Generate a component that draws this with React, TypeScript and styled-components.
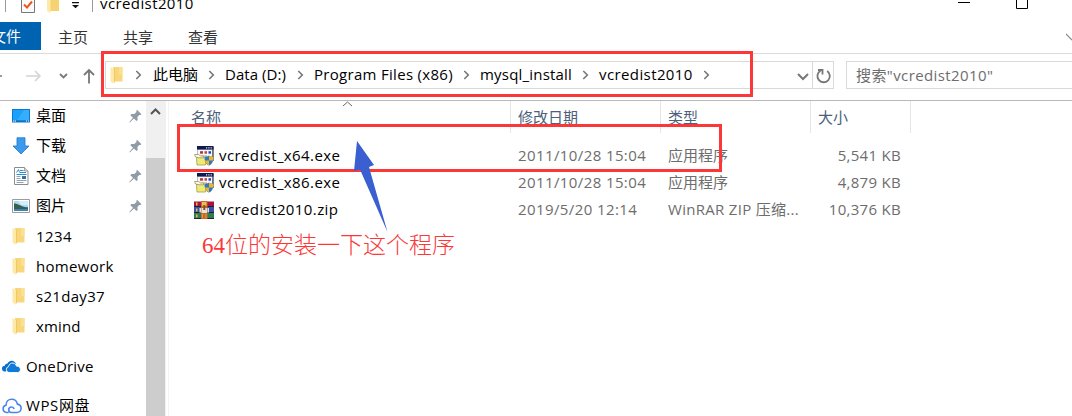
import React from "react";
import styled, { createGlobalStyle } from "styled-components";

const Global = createGlobalStyle`
  * { box-sizing: border-box; }
  html, body { margin: 0; padding: 0; background: #fff; overflow: hidden; }
  body { font-family: "Open Sans", "Noto Sans CJK SC", sans-serif; font-size: 15px; color: #000; }
  svg { display: block; flex: none; }
`;

const Window = styled.div`
  position: relative;
  width: 1072px;
  height: 416px;
  background: #fff;
  overflow: hidden;
  display: flex;
  flex-direction: column;
`;

const Text = styled.span<{ $track?: number }>`
  white-space: pre;
  letter-spacing: ${(p) => p.$track ?? 0}px;
`;

const TitleBar = styled.div`
  height: 22px;
  flex: none;
  display: flex;
  align-items: flex-start;
`;
const TitleText = styled(Text)`
  margin-left: 7px;
  line-height: 20px;
  margin-top: -7px;
`;
const Captions = styled.div`
  margin-left: auto;
  width: 114px;
`;

const Tabs = styled.div`
  height: 32px;
  flex: none;
  display: flex;
  border-bottom: 1px solid #dadada;
`;
const Tab = styled.div<{ $w: number }>`
  width: ${(p) => p.$w}px;
  height: 28px;
  line-height: 30px;
  padding-left: 17px;
  color: #333;
`;
const FileTab = styled.div`
  width: 41px;
  height: 28px;
  line-height: 28px;
  background: #0063b1;
  color: #fff;
  padding-right: 20px;
  display: flex;
  justify-content: flex-end;
`;
const ExpandMark = styled.div`
  margin-left: auto;
  padding-top: 11px;
`;

const AddressRow = styled.div`
  height: 47px;
  flex: none;
  display: flex;
  align-items: flex-start;
  padding-top: 7px;
  border-bottom: 1px solid #b9b9b9;
`;
const NavButtons = styled.div`
  width: 105px;
  height: 28px;
`;
const AddressBox = styled.div`
  width: 729px;
  height: 28px;
  border: 1px solid #d9d9d9;
  display: flex;
  align-items: center;
  padding-left: 4px;
`;
const Crumb = styled.div<{ $w: number }>`
  width: ${(p) => p.$w}px;
  height: 26px;
  line-height: 24px;
  white-space: nowrap;
`;
const Step = styled.div<{ $w: number }>`
  width: ${(p) => p.$w}px;
  display: flex;
  justify-content: center;
`;
const AddressEnd = styled.div`
  margin-left: auto;
  height: 26px;
  display: flex;
  align-items: center;
`;
const RefreshCell = styled.div`
  width: 21px;
  height: 26px;
  border-left: 1px solid #d9d9d9;
  margin-left: 3px;
`;
const SearchBox = styled.div`
  margin-left: 12px;
  flex: 1;
  height: 28px;
  border: 1px solid #d9d9d9;
  border-right: 0;
  padding-left: 9px;
  line-height: 26px;
  color: #6d6d6d;
`;

const Body = styled.div`
  flex: 1;
  display: flex;
`;
const Sidebar = styled.div`
  width: 146px;
`;
const SideRow = styled.div<{ $root?: boolean; $gap?: number }>`
  height: 30px;
  line-height: 30px;
  margin-top: ${(p) => p.$gap ?? 0}px;
  padding-left: ${(p) => (p.$root ? 2 : 12)}px;
  display: flex;
  align-items: center;
`;
const SideLabel = styled(Text)<{ $lift?: boolean }>`
  height: 30px;
  line-height: ${(p) => (p.$lift ? 28 : 30)}px;
`;
const SideIcon = styled.div`
  width: 24px;
`;
const Pin = styled.div`
  margin-left: auto;
  margin-right: 4px;
`;
const Scroll = styled.div`
  width: 20px;
  background: #f0f0f0;
  padding-right: 1px;
`;
const ScrollUp = styled.div`
  height: 57px;
  padding: 6px 0 0 4px;
`;
const Thumb = styled.div`
  height: 258px;
  background: #cdcdcd;
`;
const Divider = styled.div`
  width: 3px;
  border-right: 1px solid #f3f3f3;
`;
const Files = styled.div`
  flex: 1;
`;
const Header = styled.div`
  height: 32px;
  display: flex;
  position: relative;
`;
const HeadCell = styled.div<{ $w: number; $pad: number }>`
  width: ${(p) => p.$w}px;
  padding-left: ${(p) => p.$pad}px;
  border-right: 1px solid #e5e5e5;
  line-height: 32px;
  color: #4c607a;
`;
const SortMark = styled.div`
  position: absolute;
  left: 173px;
  top: 0;
`;
const FileList = styled.div`
  padding-top: 9px;
`;
const FileRow = styled.div`
  height: 27px;
  display: grid;
  grid-template-columns: 25px 25px 299px 150px 140px 93px;
  align-items: center;
  line-height: 27px;
  color: #6d6d6d;
`;
const Name = styled(Text)`
  color: #000;
`;
const Size = styled(Text)`
  text-align: right;
`;

const Mark = styled.div<{ $x: number; $y: number; $w: number; $h: number }>`
  position: absolute;
  left: ${(p) => p.$x}px;
  top: ${(p) => p.$y}px;
  width: ${(p) => p.$w}px;
  height: ${(p) => p.$h}px;
  border: 3px solid #fb3737;
`;
const Pointer = styled.div`
  position: absolute;
  left: 350px;
  top: 138px;
`;
const Note = styled.div`
  position: absolute;
  left: 202px;
  top: 230px;
  font-family: "Liberation Serif", "Noto Sans CJK SC", serif;
  font-weight: 300;
  font-size: 23px;
  line-height: 32px;
  color: #fb3737;
  white-space: nowrap;
`;

const Folder = () => (
  <svg width="14" height="18" viewBox="0 0 14 18">
    <path d="M3 1h9.500v14.500H3z" fill="#f8d67b" />
    <path d="M9 1h3.500v8H9z" fill="#fbdf92" />
    <path d="M.5 1 4 3v14.800L.5 15.500z" fill="#ffe9a6" />
    <path d="M4 3v14.500l.8-2V2.500z" fill="#edc65f" />
  </svg>
);

const Chevron = () => (
  <svg width="7" height="10" viewBox="0 0 7 10" fill="none" stroke="#777" strokeWidth="1.600">
    <path d="M1.300 1 5.300 5l-4 4" />
  </svg>
);

const PinIcon = () => (
  <svg width="13" height="14" viewBox="0 0 13 14">
    <path d="M8 .8 12.500 5.300l-1.200.8-1-.2L8.400 8l.3 2.900-1.300 1L5 9.600.8 13.500l-.5-.5L4 8.700 1.300 6.200l1-1.300 3 .2 2.200-2-.2-1z" fill="#8f9ba6" />
  </svg>
);

const Desktop = () => (
  <svg width="18" height="14" viewBox="0 0 18 14">
    <path d="M0 0h18v13.500H0z" fill="#0c79cf" />
    <path d="M1 1h16v10.500H1z" fill="#1ba1fb" />
    <path d="M12 1h5v10.500H5z" fill="#35aeff" />
    <path d="M1 11.500h16v1H1z" fill="#0a6dbb" />
    <path d="M1 11.500h1.500v1H1zM3 11.500h1v1H3zM14 11.500h1v1h-1zM16 11.500h1v1h-1z" fill="#fff" />
  </svg>
);
const Download = () => (
  <svg width="18" height="18" viewBox="0 0 18 18">
    <path d="M5 .8h8V9h4l-8 8L1 9h4z" fill="#3a9aee" stroke="#2b7fca" strokeWidth=".9" />
  </svg>
);
const Doc = () => (
  <svg width="18" height="18" viewBox="0 0 18 18">
    <path d="M2.500.500h10L16 4v13.500H2.500z" fill="#fff" stroke="#8c8c8c" />
    <path d="M12.500.500V4H16" fill="#ddd" stroke="#8c8c8c" strokeWidth=".8" />
    <path d="M4.500 5.500 6.500 2.500l1 3M8 3.500h3.500M8 5.500h6M4.500 7.500h10" stroke="#2c8fd6" fill="none" />
    <path d="M4.500 9.500h4M4.500 11.500h4M4.500 13.500h10M4.500 15.500h7" stroke="#8fa3b5" />
    <path d="M10 9h4v3h-4z" fill="#3d7096" />
  </svg>
);
const Picture = () => (
  <svg width="18" height="14" viewBox="0 0 18 14">
    <path d="M.5.500h17v13H.5z" fill="#fff" stroke="#9b9b9b" />
    <path d="M2 2h14v10H2z" fill="#a9d7f4" />
    <path d="M6 2h10v4H9z" fill="#d4edfb" />
    <path d="M2 8h14v4H2z" fill="#3f83b5" />
    <path d="M2 4.500c4 0 6 2.500 14 4.500v1H2z" fill="#35604f" />
  </svg>
);
const OneDrive = () => (
  <svg width="19" height="13" viewBox="0 0 19 13">
    <path d="M3.800 11.500H3A2.900 2.900 0 0 1 2.700 5.700 3 3 0 0 1 5.600 3.400C6.700.9 9 .2 11 .9c1.600.5 2.500 1.700 2.900 2.900" fill="#0a6fc8" />
    <path d="M7 12.500a3 3 0 0 1-.4-5.900C6.900 4 9 2.800 11 3.100c1.800.2 3 1.500 3.400 3 2.400-.2 4 1.400 4 3.300 0 1.800-1.300 3.100-3 3.100z" fill="#0f7bd8" stroke="#fff" strokeWidth=".9" />
  </svg>
);
const Cloud = () => (
  <svg width="20" height="16" viewBox="0 0 20 16" fill="none" stroke="#4a86ea" strokeWidth="1.600">
    <path d="M6.500 14.500H4.500A3.700 3.700 0 0 1 4 7.200C4 3.500 6.500 1.200 9.700 1.200c3 0 5.200 2 5.700 4.900 2.300.4 3.700 2.100 3.700 4.200 0 2.400-1.800 4.200-4.200 4.200H9.500c-1.700 0-2.800-1.200-2.800-2.700 0-1.600 1.200-2.800 2.800-2.800 1.300 0 2.300.8 2.600 2" />
  </svg>
);

const Installer = () => (
  <svg width="20" height="20" viewBox="0 0 20 20">
    <path d="M3 0h16.500v15H3z" fill="#b9bdc6" />
    <path d="M3 0h16.500v3.500H3z" fill="#10194f" />
    <path d="M12 1.200h1.200v1.200H12zM14.300 1.200h1.200v1.200h-1.200zM16.600 1.200h1.200v1.200h-1.200z" fill="#dfe6ff" />
    <path d="M4 4h14v9H4z" fill="#f7f7f9" />
    <path d="M18.500 1h1v14h-1z" fill="#222a45" />
    <path d="M6 5.200h3v2.500H6z" fill="#b63535" />
    <path d="M10.500 5.200h2.500v2.500h-2.500z" fill="#c03d4f" />
    <path d="M14.500 5.200H17v2.500h-2.500z" fill="#2346b3" />
    <path d="M2.500 11.500 8 10h5l-1.500 9H3z" fill="#eeea78" stroke="#a59b45" strokeWidth=".8" />
    <path d="M.6 8.500h4l2 1.500h3v1.800H5L1.500 11z" fill="#fffbe0" stroke="#8c8458" strokeWidth=".7" />
    <path d="M15 9.500c1.300 1 2.700 1.400 4.500 1.400 0 4-1 6.900-4.500 8.700-3.500-1.800-4.500-4.700-4.500-8.700 1.800 0 3.200-.4 4.500-1.400z" fill="#2c7ac9" />
    <path d="M15 9.500c1.300 1 2.700 1.400 4.500 1.400 0 1.500 0 2.500-.4 3.700H15zM10.900 14.600H15v5c-2.300-1.200-3.600-2.900-4.100-5z" fill="#f0b429" />
  </svg>
);
const Archive = () => (
  <svg width="20" height="18" viewBox="0 0 20 18">
    <path d="M0 .500h20v5.500H0z" fill="#a3173c" />
    <path d="M0 6h20v6H0z" fill="#3c4fae" />
    <path d="M0 12h20v6H0z" fill="#2e7d4f" />
    <path d="M0 5h20v1H0zM0 11h20v1H0zM0 17h20v1H0z" fill="#222033" />
    <path d="M2 1.500h1.500v3H2zM2 7.500h1.500v3H2zM2 13.500h1.500v3H2z" fill="#e6bd4a" />
    <path d="M7 0h6.500v18H7z" fill="#c56a24" />
    <path d="M8 1h4.500v4H8z" fill="#f3b95a" />
    <path d="M5.500 7h1.500v4.500H5.500zM13.500 7H15v4.500h-1.500z" fill="#ddd" />
    <path d="M7.500 7h5.500v5H7.500z" fill="#e7e2da" />
    <path d="M9.300 4h2v5h-2z" fill="#8a531e" />
    <path d="M8 13h1v4H8zM11.500 13h1v4h-1z" fill="#e79b4a" />
  </svg>
);

const quick = [
  { icon: <Desktop />, label: "桌面", pin: true },
  { icon: <Download />, label: "下载", pin: true },
  { icon: <Doc />, label: "文档", pin: true },
  { icon: <Picture />, label: "图片", pin: true },
  { icon: <Folder />, label: "1234", track: 0.4 },
  { icon: <Folder />, label: "homework", track: 0.3 },
  { icon: <Folder />, label: "s21day37", track: 0.3 },
  { icon: <Folder />, label: "xmind", track: 0.15 },
];

const crumbs = [
  { label: "此电脑", w: 45, step: 27, track: 0 },
  { label: "Data (D:)", w: 62, step: 27, track: 0.05 },
  { label: "Program Files (x86)", w: 139, step: 27, track: 0.3 },
  { label: "mysql_install", w: 92, step: 27, track: 0.2 },
  { label: "vcredist2010", w: 94, step: 27, track: 0.4 },
];

const files = [
  { icon: <Installer />, name: "vcredist_x64.exe", date: "2011/10/28 15:04", type: "应用程序", track: 0, size: "5,541 KB" },
  { icon: <Installer />, name: "vcredist_x86.exe", date: "2011/10/28 15:04", type: "应用程序", track: 0, size: "4,879 KB" },
  { icon: <Archive />, name: "vcredist2010.zip", date: "2019/5/20 12:14", type: "WinRAR ZIP 压缩...", track: 0.3, size: "10,376 KB" },
];

export default function App() {
  return (
    <Window>
      <Global />
      <TitleBar>
        <svg width="93" height="14" viewBox="0 0 93 14">
          <path d="M5.500 0v12M92.500 0v12" stroke="#9a9a9a" />
          <path d="M21.500-3h13v15.500h-13z" fill="#fafafa" stroke="#777" />
          <path d="M24 4.500 27 7.500l5-6" fill="none" stroke="#e8591c" strokeWidth="2" />
          <path d="M49 0h10v11H49z" fill="#f6d273" />
          <path d="M47 0h3.500v13L47 11z" fill="#ffe9a6" />
          <path d="M72 2h7v1.300h-7zM72 5h7l-3.500 3.300z" fill="#111" />
        </svg>
        <TitleText $track={0.4}>vcredist2010</TitleText>
        <Captions>
          <svg width="114" height="12" viewBox="0 0 114 12" fill="none" stroke="#000">
            <path d="M0 2.500h12M58.500-3v11.500h11V-3" />
          </svg>
        </Captions>
      </TitleBar>

      <Tabs>
        <FileTab><Text>文件</Text></FileTab>
        <Tab $w={65}>主页</Tab>
        <Tab $w={65}>共享</Tab>
        <Tab $w={65}>查看</Tab>
        <ExpandMark>
          <svg width="6" height="8" viewBox="0 0 6 8"><path d="M0 1l6 6" stroke="#888" strokeWidth="1.200" /></svg>
        </ExpandMark>
      </Tabs>

      <AddressRow>
        <NavButtons>
          <svg width="105" height="28" viewBox="0 0 105 28" fill="none">
            <path d="M0 15h2" stroke="#777" strokeWidth="1.600" />
            <path d="M26 15h14M35 10l5 5-5 5" stroke="#d4d4d4" strokeWidth="1.600" />
            <path d="M60 13l3.500 3.500L67 13" stroke="#7a7a7a" strokeWidth="1.800" />
            <path d="M89 22.500V9.500M84 14l5-5 5 5" stroke="#777" strokeWidth="1.800" />
          </svg>
        </NavButtons>
        <AddressBox>
          <Folder />
          <Step $w={29}><Chevron /></Step>
          {crumbs.map((c) => (
            <React.Fragment key={c.label}>
              <Crumb $w={c.w}><Text $track={c.track}>{c.label}</Text></Crumb>
              <Step $w={c.step}><Chevron /></Step>
            </React.Fragment>
          ))}
          <AddressEnd>
            <svg width="12" height="11" viewBox="0 0 12 11" fill="none" stroke="#777" strokeWidth="2">
              <path d="M1 4l5 5 5-5" />
            </svg>
            <RefreshCell>
              <svg width="20" height="26" viewBox="0 0 20 26" fill="none" stroke="#777" strokeWidth="1.800">
                <path d="M14.200 9A6.200 6.200 0 1 1 7.500 8.700M5 8h4.500v4.500" />
              </svg>
            </RefreshCell>
          </AddressEnd>
        </AddressBox>
        <SearchBox><Text $track={0.4}>搜索"vcredist2010"</Text></SearchBox>
      </AddressRow>

      <Body>
        <Sidebar>
          {quick.map((q) => (
            <SideRow key={q.label}>
              <SideIcon>{q.icon}</SideIcon>
              <SideLabel $track={q.track} $lift={q.pin}>{q.label}</SideLabel>
              {q.pin && <Pin><PinIcon /></Pin>}
            </SideRow>
          ))}
          <SideRow $root $gap={10}>
            <SideIcon><OneDrive /></SideIcon>
            <SideLabel $track={0.2}>OneDrive</SideLabel>
          </SideRow>
          <SideRow $root $gap={10}>
            <SideIcon><Cloud /></SideIcon>
            <SideLabel $track={0.6} $lift>WPS网盘</SideLabel>
          </SideRow>
        </Sidebar>
        <Scroll>
          <ScrollUp>
            <svg width="11" height="9" viewBox="0 0 11 9" fill="none" stroke="#555" strokeWidth="2">
              <path d="M1 7l4.500-4.500L10 7" />
            </svg>
          </ScrollUp>
          <Thumb />
        </Scroll>
        <Divider />
        <Files>
          <Header>
            <HeadCell $w={342} $pad={22}>名称</HeadCell>
            <HeadCell $w={150} $pad={7}>修改日期</HeadCell>
            <HeadCell $w={150} $pad={7}>类型</HeadCell>
            <HeadCell $w={100} $pad={7}>大小</HeadCell>
            <SortMark>
              <svg width="11" height="6" viewBox="0 0 11 6" fill="none" stroke="#666"><path d="M1 5l4.500-4L10 5" /></svg>
            </SortMark>
          </Header>
          <FileList>
            {files.map((f) => (
              <FileRow key={f.name}>
                <span />
                {f.icon}
                <Name $track={0.4}>{f.name}</Name>
                <Text $track={0.4}>{f.date}</Text>
                <Text $track={f.track}>{f.type}</Text>
                <Size $track={0.3}>{f.size}</Size>
              </FileRow>
            ))}
          </FileList>
        </Files>
      </Body>

      <Mark $x={101} $y={51} $w={652} $h={46} />
      <Mark $x={177} $y={124} $w={545} $h={48} />
      <Pointer>
        <svg width="40" height="96" viewBox="0 0 40 96">
          <path d="M7 3 24 27l-5 2 18.500 65L10 31.500 4 33z" fill="#3a5fd0" />
        </svg>
      </Pointer>
      <Note>64位的安装一下这个程序</Note>
    </Window>
  );
}
